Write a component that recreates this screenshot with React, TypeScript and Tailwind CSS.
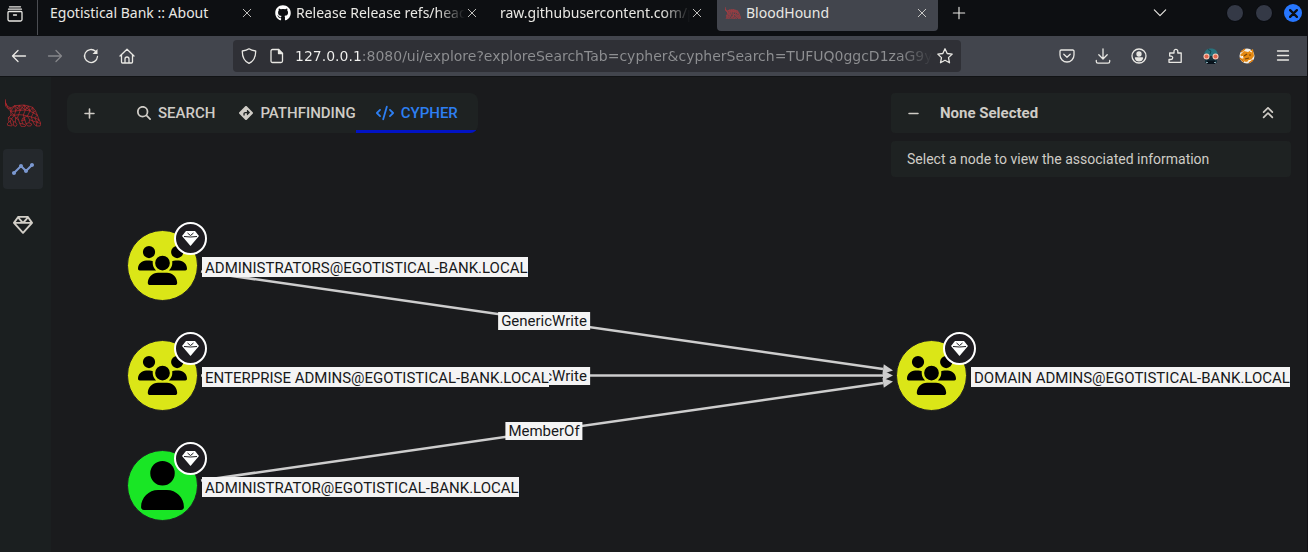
import React from "react";
import { FaGithub, FaAnglesUp, FaCode, FaDiamondTurnRight, FaMagnifyingGlass, FaMinus, FaPlus, FaRegGem, FaUser, FaUsers } from "react-icons/fa6";
import { MdTimeline } from "react-icons/md";

type IconProps = { className?: string };

function Stroke({ children, className = "size-4" }: { children: React.ReactNode; className?: string }) {
  return (
    <svg viewBox="0 0 16 16" className={className} fill="none" stroke="currentColor" strokeWidth="1.3" strokeLinecap="round" strokeLinejoin="round" aria-hidden="true">
      {children}
    </svg>
  );
}

function Hound({ className }: IconProps) {
  return (
    <svg viewBox="0 0 108 84" className={className} fill="none" stroke="currentColor" strokeLinejoin="round" aria-hidden="true">
      <path d="M0 1 2 12 7 22 18 27 29 20 43 19 57 18 70 21 83 25 91 35 97 48 102 62 108 74 105 81 94 81 88 76 83 66 74 62 72 71 80 75 77 81 68 81 63 74 60 63 53 58 50 65 54 75 62 78 60 83 49 83 44 73 41 63 38 55 32 57 31 69 36 77 33 82 26 80 25 68 20 59 16 66 18 75 22 77 20 81 8 79 7 74 12 69 10 56 18 48 17 37 10 29 2 22Z" />
      <path d="M2 12 10 29 18 27 17 37 29 20 32 36 17 37 28 49 18 48M28 49 32 36 43 19 46 34 32 36M28 49 41 47 46 34 57 18 61 33 46 34M41 47 55 48 61 33 70 21 75 36 61 33M55 48 67 51 75 36 83 25 85 42 75 36M67 51 79 54 85 42 97 48 89 57 79 54M89 57 102 62 96 70 89 57M96 70 108 74M96 70 94 81M79 54 83 66 96 70M67 51 74 62M55 48 60 63M41 47 38 55M28 49 20 59M10 56 20 59M85 42 91 35M29 20 46 34M43 19 61 33M57 18 75 36M53 58 67 51M50 65 60 63M72 71 63 74M54 75 44 73M25 68 31 69M12 69 16 66M28 49 32 57 41 63" />
    </svg>
  );
}

function BadgeGem() {
  return (
    <svg viewBox="0 0 17 15" className="w-[17px]" aria-hidden="true">
      <path d="M4 0h9l4 5-8.500 10L0 5Z" fill="#fff" />
      <path d="M2 5.500 8.500 6 15 5.500M5.500 2l3 2.500 3-2.500" fill="none" stroke="#1e1c21" strokeWidth="1" />
    </svg>
  );
}

function Puzzle() {
  return (
    <Stroke>
      <path d="M2 14.3h12.2V5H10.8V3.2a1.9 1.9 0 0 0-3.8 0V5H2.7v3.1H4a1.7 1.7 0 0 1 0 3.4H2Z" />
    </Stroke>
  );
}

function RobotGoggles() {
  return (
    <svg viewBox="0 0 16 16" className="size-4" aria-hidden="true">
      <path d="M1.500 8C.500 3 4 .500 8 .500S15.500 3 14.500 8Z" fill="#28727c" />
      <path d="M5 1.5 8 3 7 6" stroke="#164750" fill="none" />
      <path d="M2 8h12v7H2Z" fill="#19333d" />
      <path d="M4 12.5h8V16H4Z" fill="#07111a" />
      <circle cx="3.5" cy="8.5" r="3" fill="#f7cdbb" />
      <circle cx="12.5" cy="8.5" r="3" fill="#f7cdbb" />
      <circle cx="3.5" cy="8.5" r="2" fill="#e0684e" />
      <circle cx="12.5" cy="8.5" r="2" fill="#e0684e" />
      <path d="M3 14.500h2M11 14.500h2" stroke="#7ea1ad" />
    </svg>
  );
}

function Fox() {
  return (
    <svg viewBox="0 0 16 16" className="size-4" aria-hidden="true">
      <circle cx="8" cy="8" r="7.5" fill="#f2eee6" />
      <path d="M1 7 5 3 9 4 14 1 15 8 12 12 7 14 2 11 5 10Z" fill="#e58a12" />
      <path d="M2 4 6 1M10 15l4-3M1 10l4 4" stroke="#d97706" strokeWidth="1.5" />
      <path d="M5 8 8 6M10 7h2M6 11 10 10" stroke="#7a4309" strokeWidth="1.2" />
      <path d="M3 8 4 9M11 3 13 4M9 13 12 12" stroke="#fff" />
    </svg>
  );
}

function BrowserTab({ title, icon, active = false, fade = false }: { title: string; icon?: React.ReactNode; active?: boolean; fade?: boolean }) {
  return (
    <div className={`mx-0.5 flex h-[31px] min-w-0 max-w-[221px] flex-1 items-center rounded-b pl-2 pr-[11px] pb-[5px] ${active ? "bg-[#42454d]" : ""}`}>
      <a href="#" className="flex min-w-0 flex-1 items-center gap-[5px]">
        {icon}
        <span className={`min-w-0 flex-1 overflow-hidden whitespace-nowrap ${fade ? "[mask-image:linear-gradient(to_right,#000_calc(100%_-_28px),transparent)]" : ""}`}>{title}</span>
      </a>
      <button aria-label={`Close ${title}`} className="ml-0.5 shrink-0">
        <Stroke className="size-[10px]"><path d="m2 2 12 12M14 2 2 14" /></Stroke>
      </button>
    </div>
  );
}

function ToolButton({ label, children, dim = false }: { label: string; children: React.ReactNode; dim?: boolean }) {
  return (
    <button aria-label={label} className={`flex h-8 w-9 items-center justify-center ${dim ? "text-[#85868a]" : "text-[#e9e8e4]"}`}>
      {children}
    </button>
  );
}

function BrowserChrome() {
  return (
    <header className="font-['DejaVu_Sans',sans-serif] text-[#e9e8e4]">
      <div className="flex h-9 items-start bg-[#0d0f12] font-['Noto_Sans',sans-serif] text-sm leading-5">
        <button aria-label="Recent browsing" className="mr-0.5 flex h-[35px] w-[38px] shrink-0 items-center border-r border-[#4b4d52] pb-2 pl-[7px]">
          <Stroke><path d="M2.5.8h11M1.5 3.2h13M2 5.5h12a1 1 0 0 1 1 1v7a1.5 1.5 0 0 1-1.5 1.5h-11A1.5 1.5 0 0 1 1 13.500v-7a1 1 0 0 1 1-1ZM6.500 9h3" /></Stroke>
        </button>
        <BrowserTab title="Egotistical Bank :: About" />
        <BrowserTab title="Release Release refs/heads" fade icon={<FaGithub className="size-4 shrink-0 text-white" />} />
        <BrowserTab title="raw.githubusercontent.com/p" fade />
        <BrowserTab title="BloodHound" active icon={<Hound className="w-4 shrink-0 text-[#a33d42] [stroke-width:5]" />} />
        <button aria-label="New tab" className="ml-3 mt-1.5 shrink-0">
          <Stroke className="size-[14px]"><path d="M8 1.500v13M1.500 8h13" /></Stroke>
        </button>
        <div className="ml-auto flex h-[26px] shrink-0 items-center pr-[5px]">
          <button aria-label="List all tabs" className="mr-[59px]">
            <Stroke className="size-[14px]"><path d="m1.500 4.500 6.500 6.500 6.500-6.500" /></Stroke>
          </button>
          <div className="flex gap-[11px]">
            <button aria-label="Minimize" className="size-[18px] rounded-full border border-[#080a0e] bg-[#343946]" />
            <button aria-label="Maximize" className="size-[18px] rounded-full border border-[#080a0e] bg-[#343946]" />
            <button aria-label="Close window" className="flex size-[18px] items-center justify-center rounded-full bg-[#2777ff] text-[#0d0f12]">
              <Stroke className="size-[9px] [stroke-width:4]"><path d="m2 2 12 12M14 2 2 14" /></Stroke>
            </button>
          </div>
        </div>
      </div>
      <div className="flex h-10 items-center bg-[#42454d] pl-px pr-[6px]">
        <ToolButton label="Back"><Stroke><path d="M14.500 8h-13M7 2.500 1.500 8 7 13.500" /></Stroke></ToolButton>
        <ToolButton label="Forward" dim><Stroke><path d="M1.500 8h13M9 2.500 14.500 8 9 13.500" /></Stroke></ToolButton>
        <ToolButton label="Reload"><Stroke><path d="M14.500 8.500A6.500 6.500 0 1 1 12.500 3.300" /><path d="M14.500 1v5h-5Z" fill="currentColor" stroke="none" /></Stroke></ToolButton>
        <ToolButton label="Home"><Stroke><path d="M1 8 8 1.300 15 8M2.500 6.800V14a1 1 0 0 0 1 1h9a1 1 0 0 0 1-1V6.800M6 15v-4a2 2 0 0 1 4 0v4" /></Stroke></ToolButton>
        <div className="mx-[88px] flex h-8 min-w-0 flex-1 items-center rounded bg-[#2f3036] pl-2 pr-2">
          <Stroke className="size-4 shrink-0"><path d="M8 .8c2 1.600 4.400 2 6.700 2.200C14.800 8.500 13 13 8 15.300 3 13 1.200 8.500 1.300 3 3.600 2.800 6 2.400 8 .8Z" /></Stroke>
          <Stroke className="ml-3 size-4 shrink-0"><path d="M3.500 1.500h6l4 4V13a1.500 1.500 0 0 1-1.500 1.500H3.500A1.500 1.500 0 0 1 2 13V3a1.500 1.500 0 0 1 1.500-1.500Z" /><path d="M9.500 1.500v4h4Z" fill="currentColor" /></Stroke>
          <input
            aria-label="Address"
            defaultValue="127.0.0.1:8080/ui/explore?exploreSearchTab=cypher&cypherSearch=TUFUQ0ggcD1zaG9ydGVz"
            className="ml-[10px] mr-1 h-8 min-w-0 flex-1 bg-[linear-gradient(to_right,#f2f2f0_67px,#8e8f92_67px,#8e8f92_calc(100%_-_34px),transparent)] bg-clip-text text-sm text-transparent outline-none"
          />
          <button aria-label="Bookmark this page" className="shrink-0"><Stroke><path d="m8 .8 2.200 4.700 5 .6-3.700 3.500 1 5.200L8 12.300l-4.500 2.500 1-5.200L.8 6.100l5-.6Z" /></Stroke></button>
        </div>
        <ToolButton label="Save to Pocket"><Stroke><path d="M2.200 2h11.600A1.200 1.200 0 0 1 15 3.200V7A7 7 0 0 1 1 7V3.200A1.200 1.200 0 0 1 2.200 2ZM4.800 6.300 8 9.300l3.200-3" /></Stroke></ToolButton>
        <ToolButton label="Downloads"><Stroke><path d="M8 .8v10M3.800 6.800 8 11l4.200-4.200M1.300 12.500v1a1.700 1.700 0 0 0 1.700 1.700h10a1.700 1.700 0 0 0 1.700-1.700v-1" /></Stroke></ToolButton>
        <ToolButton label="Account"><Stroke><circle cx="8" cy="8" r="7" /><circle cx="8" cy="6" r="2" fill="currentColor" /><path d="M4.500 10h7c-.5 2-1.800 2.800-3.500 2.800S5 12 4.500 10Z" fill="currentColor" /></Stroke></ToolButton>
        <ToolButton label="Extensions"><Puzzle /></ToolButton>
        <ToolButton label="User agent"><RobotGoggles /></ToolButton>
        <ToolButton label="FoxyProxy"><Fox /></ToolButton>
        <ToolButton label="Menu"><Stroke><path d="M2.500 3h11M2.500 7.500h11M2.500 12h11" /></Stroke></ToolButton>
      </div>
    </header>
  );
}

type GraphNode = { name: string; kind: "group" | "user"; place: string };

const nodes: GraphNode[] = [
  { name: "ADMINISTRATORS@EGOTISTICAL-BANK.LOCAL", kind: "group", place: "left-[76px] top-[153px]" },
  { name: "ENTERPRISE ADMINS@EGOTISTICAL-BANK.LOCAL", kind: "group", place: "left-[76px] top-[263px]" },
  { name: "ADMINISTRATOR@EGOTISTICAL-BANK.LOCAL", kind: "user", place: "left-[76px] top-[373px]" },
  { name: "DOMAIN ADMINS@EGOTISTICAL-BANK.LOCAL", kind: "group", place: "left-[845px] top-[263px]" },
];

const edges = [
  { name: "GenericWrite", place: "left-[493px] top-[235px]" },
  { name: "GenericWrite", place: "left-[493px] top-[290px]" },
  { name: "MemberOf", place: "left-[493px] top-[345px]" },
];

function Node({ name, kind, place }: GraphNode) {
  return (
    <div className={`absolute flex items-center ${place}`}>
      <div className={`relative flex size-[71px] shrink-0 items-center justify-center rounded-full border border-[#202024] text-black ${kind === "user" ? "bg-[#19e625]" : "bg-[#dbe617]"}`}>
        {kind === "user" ? <FaUser className="size-[49px]" /> : <FaUsers className="size-[49px]" />}
        <div className="absolute -right-[10px] -top-[9px] flex size-[33px] items-center justify-center rounded-full border-2 border-white bg-[#1e1c21] text-white">
          <BadgeGem />
        </div>
      </div>
      <span className="ml-1 mt-[3px] h-5 whitespace-nowrap bg-[#f4f4f4] pl-[3px] leading-[22px] text-[#17181a]">{name}</span>
    </div>
  );
}

function Graph() {
  return (
    <div className="absolute inset-0 overflow-hidden text-[15px]">
      <svg className="absolute left-0 top-0 h-full w-full" aria-hidden="true">
        <g stroke="#cdcdcd" strokeWidth="2.500">
          <path d="M150 194.500 832 292" />
          <path d="M150 298.500H832" />
          <path d="M150 403.500 832 306" />
        </g>
        <g fill="#cdcdcd">
          <path d="M0 0-10-5V5Z" transform="translate(842 293.500) rotate(8)" />
          <path d="M0 0-10-5V5Z" transform="translate(842 298.500)" />
          <path d="M0 0-10-5V5Z" transform="translate(842 304.500) rotate(-8)" />
        </g>
      </svg>
      {edges.map((edge, i) => (
        <span key={i} className={`absolute h-[18px] -translate-x-1/2 whitespace-nowrap bg-[#f4f4f4] px-[3px] leading-[18px] text-[#17181a] ${edge.place}`}>{edge.name}</span>
      ))}
      {nodes.map((node) => <Node key={node.name} {...node} />)}
    </div>
  );
}

export default function App() {
  return (
    <div className="flex min-h-screen flex-col border-r border-[#111015] bg-[#1a1b1d] font-[Roboto,sans-serif]">
      <BrowserChrome />
      <div className="flex flex-1 border-t border-[#111315]">
        <nav className="flex w-[51px] shrink-0 flex-col items-start bg-[#1b1f20] pl-[3px] pt-[22px] text-[#d2cec7]">
          <a href="#" aria-label="BloodHound" className="ml-0.5"><Hound className="w-9 text-[#c42b31] [stroke-width:2]" /></a>
          <a href="#" aria-label="Explore" className="mt-[22px] flex size-10 items-center justify-center rounded bg-[#24282c] text-[#7b98d0]"><MdTimeline className="size-6" /></a>
          <a href="#" aria-label="Privilege zones" className="mt-4 flex size-10 items-center justify-center"><FaRegGem className="size-5" /></a>
        </nav>
        <main className="relative flex min-h-[475px] min-w-0 flex-1 items-start justify-between pl-4 pr-4 pt-4 text-[15px] text-[#cfccc6]">
          <Graph />
          <div className="relative flex h-10 items-center overflow-hidden rounded-lg bg-[#1e2222] pl-4 font-medium">
            <button aria-label="Expand search panel"><FaPlus className="size-[13px]" /></button>
            <div role="tablist" className="ml-[37px] flex h-10">
              <button role="tab" className="flex items-center gap-[7px] px-1"><FaMagnifyingGlass className="size-[14px]" />SEARCH</button>
              <button role="tab" className="ml-4 flex items-center gap-[7px] pl-1"><FaDiamondTurnRight className="size-[14px]" />PATHFINDING</button>
              <button role="tab" aria-selected="true" className="flex items-center gap-[7px] border-b-[3px] border-[#0213c5] px-5 pt-[3px] text-[#2d7ff3]"><FaCode className="size-[18px]" />CYPHER</button>
            </div>
          </div>
          <aside className="relative w-[400px] shrink-0">
            <div className="flex h-10 items-center rounded bg-[#1e2222] px-4">
              <button aria-label="Collapse panel"><FaMinus className="size-[13px]" /></button>
              <h2 className="ml-5 flex-1 font-bold">None Selected</h2>
              <button aria-label="Collapse all"><FaAnglesUp className="size-[14px]" /></button>
            </div>
            <p className="mt-2 flex h-9 items-center rounded bg-[#1e2222] px-4 text-sm">Select a node to view the associated information</p>
          </aside>
        </main>
      </div>
    </div>
  );
}
